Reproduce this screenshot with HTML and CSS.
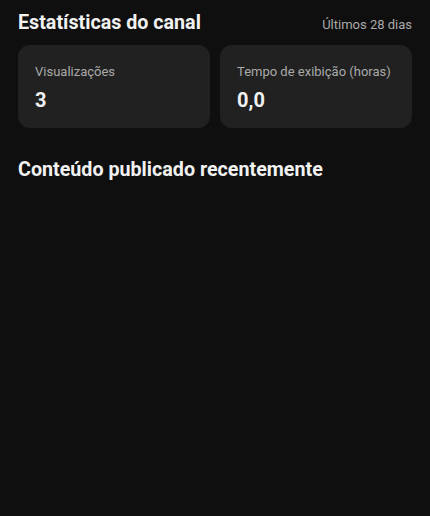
FILE: index.html
```html
<!DOCTYPE html>
<html lang="pt">

<head>
    <meta charset="UTF-8">
    <title>Estatísticas do canal</title>
    <link rel="stylesheet" href="styles.css">
</head>

<body>
    <div class="page">
        <div class="stats-head">
            <h2 class="title">Estatísticas do canal</h2>
            <span class="period">Últimos 28 dias</span>
        </div>
        <div class="cards">
            <div class="card">
                <div class="card-label">Visualizações</div>
                <div class="card-value">3</div>
            </div>
            <div class="card">
                <div class="card-label">Tempo de exibição (horas)</div>
                <div class="card-value">0,0</div>
            </div>
        </div>
        <h2 class="title recent">Conteúdo publicado recentemente</h2>
    </div>
</body>

</html>
```
FILE: styles.css
```css
* {
    margin: 0;
    padding: 0;
    box-sizing: border-box;
}

body {
    background: #0f0f0f;
    color: #f1f1f1;
    font-family: Roboto, "Noto Sans", sans-serif;
}

.page {
    padding: 11px 18px 0;
}

.stats-head {
    display: flex;
    justify-content: space-between;
    align-items: baseline;
    height: 24px;
}

.title {
    font-size: 19.7px;
    font-weight: 700;
    line-height: 24px;
}

.period {
    font-size: 13px;
    color: #aaaaaa;
}

.cards {
    display: grid;
    grid-template-columns: 1fr 1fr;
    gap: 10px;
    margin-top: 10px;
}

.card {
    background: #212121;
    border-radius: 12px;
    height: 83px;
    padding: 19px 17px 0;
}

.card-label {
    font-size: 13px;
    color: #aaaaaa;
    line-height: 16px;
    white-space: nowrap;
}

.card-value {
    font-size: 20px;
    font-weight: 700;
    line-height: 24px;
    margin-top: 8px;
}

.recent {
    margin-top: 30px;
}
```
